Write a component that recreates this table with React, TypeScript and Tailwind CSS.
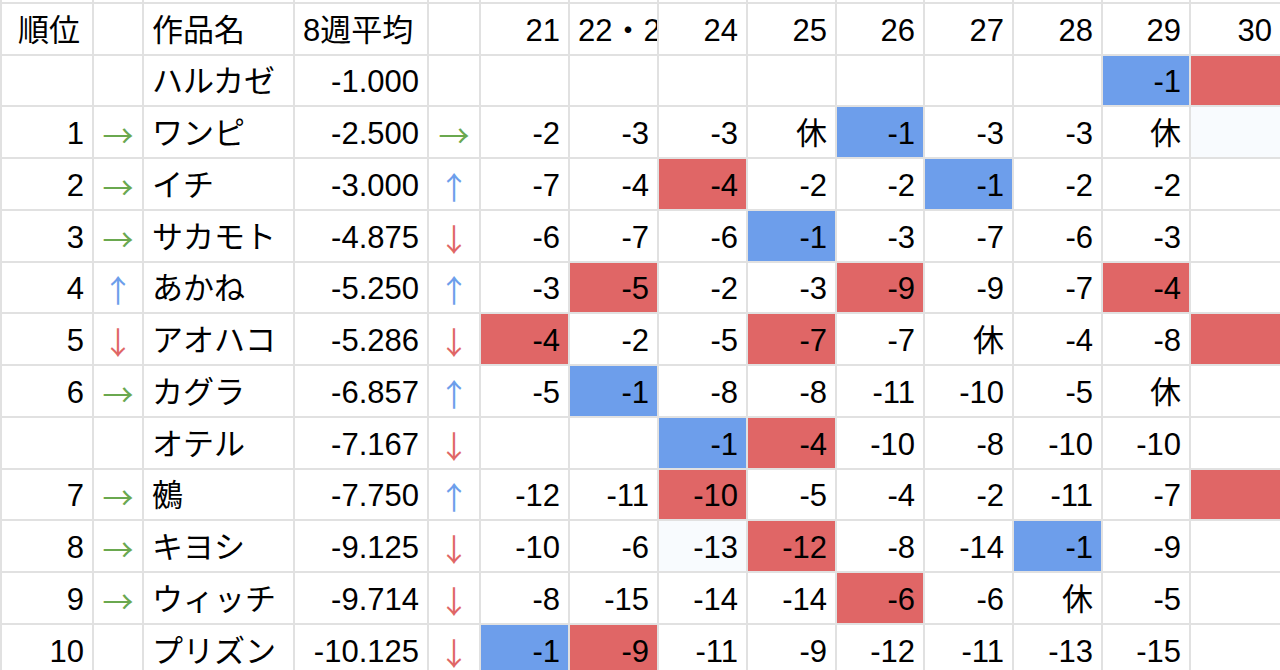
import React from "react";

type Row = [string, string, string, string, string, string[]];

const rows: Row[] = [
  ["", "", "ハルカゼ", "-1.000", "", ["", "", "", "", "", "", "", "-1|b", "|r"]],
  ["1", "→", "ワンピ", "-2.500", "→", ["-2", "-3", "-3", "休", "-1|b", "-3", "-3", "休", "|f"]],
  ["2", "→", "イチ", "-3.000", "↑", ["-7", "-4", "-4|r", "-2", "-2", "-1|b", "-2", "-2", ""]],
  ["3", "→", "サカモト", "-4.875", "↓", ["-6", "-7", "-6", "-1|b", "-3", "-7", "-6", "-3", ""]],
  ["4", "↑", "あかね", "-5.250", "↑", ["-3", "-5|r", "-2", "-3", "-9|r", "-9", "-7", "-4|r", ""]],
  ["5", "↓", "アオハコ", "-5.286", "↓", ["-4|r", "-2", "-5", "-7|r", "-7", "休", "-4", "-8", "|r"]],
  ["6", "→", "カグラ", "-6.857", "↑", ["-5", "-1|b", "-8", "-8", "-11", "-10", "-5", "休", ""]],
  ["", "", "オテル", "-7.167", "↓", ["", "", "-1|b", "-4|r", "-10", "-8", "-10", "-10", ""]],
  ["7", "→", "鵺", "-7.750", "↑", ["-12", "-11", "-10|r", "-5", "-4", "-2", "-11", "-7", "|r"]],
  ["8", "→", "キヨシ", "-9.125", "↓", ["-10", "-6", "-13|f", "-12|r", "-8", "-14", "-1|b", "-9", ""]],
  ["9", "→", "ウィッチ", "-9.714", "↓", ["-8", "-15", "-14", "-14", "-6|r", "-6", "休", "-5", ""]],
  ["10", "", "プリズン", "-10.125", "↓", ["-1|b", "-9|r", "-11", "-9", "-12", "-11", "-13", "-15", ""]],
];

const weeks = ["21", "22・23", "24", "25", "26", "27", "28", "29", "30"];

const base = "bg-white flex items-center overflow-hidden whitespace-nowrap leading-none pt-[3px]";

function Arrow({ a }: { a: string }) {
  const color =
    a === "→" ? "text-[#6aa84f]" : a === "↑" ? "text-[#6d9eeb]" : "text-[#e06666]";
  return (
    <div className={`${base} justify-center`}>
      {a && (
        <span className={`${color} text-[31px]`} style={{ fontFamily: '"Noto Sans CJK JP", sans-serif' }}>
          {a}
        </span>
      )}
    </div>
  );
}

function Val({ s }: { s: string }) {
  const [text, c] = s.split("|");
  const bg =
    c === "b" ? "bg-[#6d9eeb]" : c === "r" ? "bg-[#e06666]" : c === "f" ? "bg-[#f8fbfe]" : "bg-white";
  return (
    <div className={`${bg} flex items-center justify-end pr-2 pt-[3px] overflow-hidden whitespace-nowrap leading-none`}>
      {text}
    </div>
  );
}

export default function App() {
  return (
    <div
      className="w-[1280px] h-[670px] overflow-hidden bg-[#e1e1e1] pl-[2px] text-[31px] text-black"
      style={{ fontFamily: '"Liberation Sans", "Noto Sans CJK JP", sans-serif' }}
    >
      <div className="grid gap-[2px] grid-cols-[90px_48px_149px_132px_50px_87px_87px_87px_87px_86px_87px_87px_86px_89px] grid-rows-[2px_49.5px_repeat(12,49.75px)]">
        {Array.from({ length: 14 }).map((_, i) => (
          <div key={"s" + i} className="bg-white" />
        ))}
        <div className={`${base} pl-4`}>順位</div>
        <div className={base} />
        <div className={`${base} pl-2`}>作品名</div>
        <div className={`${base} pl-2`}>8週平均</div>
        <div className={base} />
        {weeks.map((w) =>
          w === "22・23" ? (
            <div key={w} className={`${base} pl-2`}>
              {w}
            </div>
          ) : (
            <div key={w} className={`${base} justify-end pr-2`}>
              {w}
            </div>
          )
        )}
        {rows.map((r, i) => (
          <React.Fragment key={i}>
            <div className={`${base} justify-end pr-2`}>{r[0]}</div>
            <Arrow a={r[1]} />
            <div className={`${base} pl-2`}>{r[2]}</div>
            <div className={`${base} justify-end pr-2`}>{r[3]}</div>
            <Arrow a={r[4]} />
            {r[5].map((s, j) => (
              <Val key={j} s={s} />
            ))}
          </React.Fragment>
        ))}
      </div>
    </div>
  );
}
